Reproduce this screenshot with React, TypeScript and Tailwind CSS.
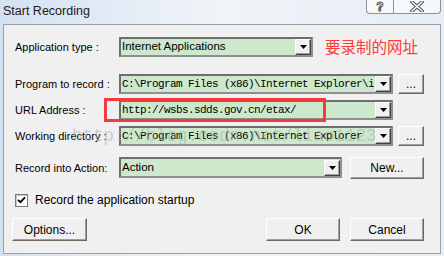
const ui = "font-['Liberation_Sans',Arial,sans-serif]";
const mono = "font-['Liberation_Mono','Courier_New',monospace]";

function DropArrow() {
  return (
    <div className="ml-auto w-[16px] h-[16px] shrink-0 bg-[#f0f0f0] border border-t-white border-l-white border-b-[#404040] border-r-[#404040] shadow-[inset_-1px_-1px_0_#a0a0a0] flex items-center justify-center">
      <svg width="7" height="4" viewBox="0 0 7 4">
        <path d="M0 0h7L3.5 4z" fill="#000" />
      </svg>
    </div>
  );
}

function Combo({ className, text, code }: { className: string; text: string; code?: boolean }) {
  return (
    <div
      className={`${className} shrink-0 border-2 border-[#8f8f8f] border-t-[#6e6e6e] border-l-[#6e6e6e] bg-[#cde8cd] flex items-center pl-[1px] pr-[0px]`}
    >
      <span
        className={
          code
            ? `${mono} text-[11px] tracking-[-0.6px] text-black whitespace-nowrap overflow-hidden`
            : `${ui} text-[11.5px] text-black whitespace-nowrap overflow-hidden`
        }
      >
        {text}
      </span>
      <DropArrow />
    </div>
  );
}

function Button({ className, label }: { className: string; label: string }) {
  return (
    <div
      className={`${className} shrink-0 bg-[#f0f0f0] border border-t-white border-l-white border-r-[#696969] border-b-[#696969] shadow-[inset_-1px_-1px_0_#a0a0a0] flex items-center justify-center ${ui} text-[12px] text-black`}
    >
      {label}
    </div>
  );
}

function Label({ text }: { text: string }) {
  return <div className={`w-[104px] shrink-0 ${ui} text-[11px] text-black whitespace-nowrap`}>{text}</div>;
}

export default function App() {
  return (
    <div className="relative w-[444px] h-[256px] overflow-hidden bg-gradient-to-r from-[#d3e2f2] via-[#f1f4f8] to-[#e6edf5]">
      {/* title bar */}
      <div className="h-[24px] flex items-start">
        <div className={`pl-[3px] pt-[2px] ${ui} text-[12.5px] text-[#1a1a1a]`}>Start Recording</div>
        <div className="ml-auto mr-[3px] flex h-[14px] border border-t-0 border-[#8d949c] rounded-b-[4px] bg-white/60">
          <div className="w-[27px] flex items-center justify-center border-r border-[#8d949c]">
            <span className={`${ui} text-[12px] font-bold leading-none text-white [-webkit-text-stroke:1px_#5a5a5a]`}>?</span>
          </div>
          <div className="w-[46px] flex items-center justify-center">
            <svg width="14" height="11" viewBox="0 0 14 11">
              <path d="M2 1l10 9M12 1L2 10" stroke="#5a5a5a" strokeWidth="3.6" strokeLinecap="square" />
              <path d="M2 1l10 9M12 1L2 10" stroke="#ffffff" strokeWidth="1.4" strokeLinecap="square" />
            </svg>
          </div>
        </div>
      </div>

      {/* client area */}
      <div className="mx-[3px] h-[230px] border border-[#98a2ad] bg-[#f0f0f0] flex flex-col pl-[11px] pr-[16px]">
        <div className="mt-[12px] h-[20px] flex items-center">
          <Label text="Application type :" />
          <Combo className="w-[194px] h-[20px]" text="Internet Applications" />
          <div className="ml-[12px] font-['Noto_Sans_CJK_SC',sans-serif] text-[15.5px] text-[#ff3a3a] whitespace-nowrap">
            要录制的网址
          </div>
        </div>

        <div className="mt-[17px] h-[20px] flex items-center">
          <Label text="Program to record :" />
          <Combo className="w-[274px] h-[20px]" text="C:\Program Files (x86)\Internet Explorer\i" code />
          <Button className="ml-[5px] w-[26px] h-[20px]" label="..." />
        </div>

        <div className="mt-[6px] h-[20px] flex items-center">
          <Label text="URL Address :" />
          <Combo className="w-[274px] h-[20px]" text="http://wsbs.sdds.gov.cn/etax/" code />
        </div>

        <div className="mt-[6px] h-[20px] flex items-center">
          <Label text="Working directory :" />
          <Combo className="w-[274px] h-[20px]" text="C:\Program Files (x86)\Internet Explorer" code />
          <Button className="ml-[5px] w-[26px] h-[20px]" label="..." />
        </div>

        <div className="mt-[11px] h-[22px] flex items-center">
          <Label text="Record into Action:" />
          <Combo className="w-[223px] h-[21px] self-start" text="Action" />
          <Button className="ml-[8px] w-[74px] h-[22px]" label="New..." />
        </div>

        <div className="mt-[13px] h-[16px] flex items-center">
          <div className="w-[13px] h-[13px] border border-[#7a7a7a] bg-white shadow-[inset_1px_1px_0_#c8c8c8] flex items-center justify-center">
            <svg width="9" height="8" viewBox="0 0 9 8">
              <path d="M1 3.8l2.4 2.4L8 1.4" stroke="#000" strokeWidth="1.8" fill="none" />
            </svg>
          </div>
          <div className={`ml-[7px] ${ui} text-[12px] text-black`}>Record the application startup</div>
        </div>

        <div className="mt-[10px] h-[23px] flex items-center -ml-[3px]">
          <Button className="w-[75px] h-[23px]" label="Options..." />
          <Button className="ml-auto w-[74px] h-[23px]" label="OK" />
          <Button className="ml-[10px] w-[74px] h-[23px]" label="Cancel" />
        </div>
      </div>

      {/* red annotation box */}
      <div className="absolute left-[104px] top-[98px] w-[222px] h-[24px] border-[3px] border-[#f23c3c]" />

      {/* watermark */}
      <div
        className={`absolute left-[72px] top-[126px] leading-[20px] ${mono} text-[17.5px] text-[#a8a8a8]/50 whitespace-nowrap pointer-events-none`}
      >
        http://blog.csdn.net/liao1123
      </div>
    </div>
  );
}
